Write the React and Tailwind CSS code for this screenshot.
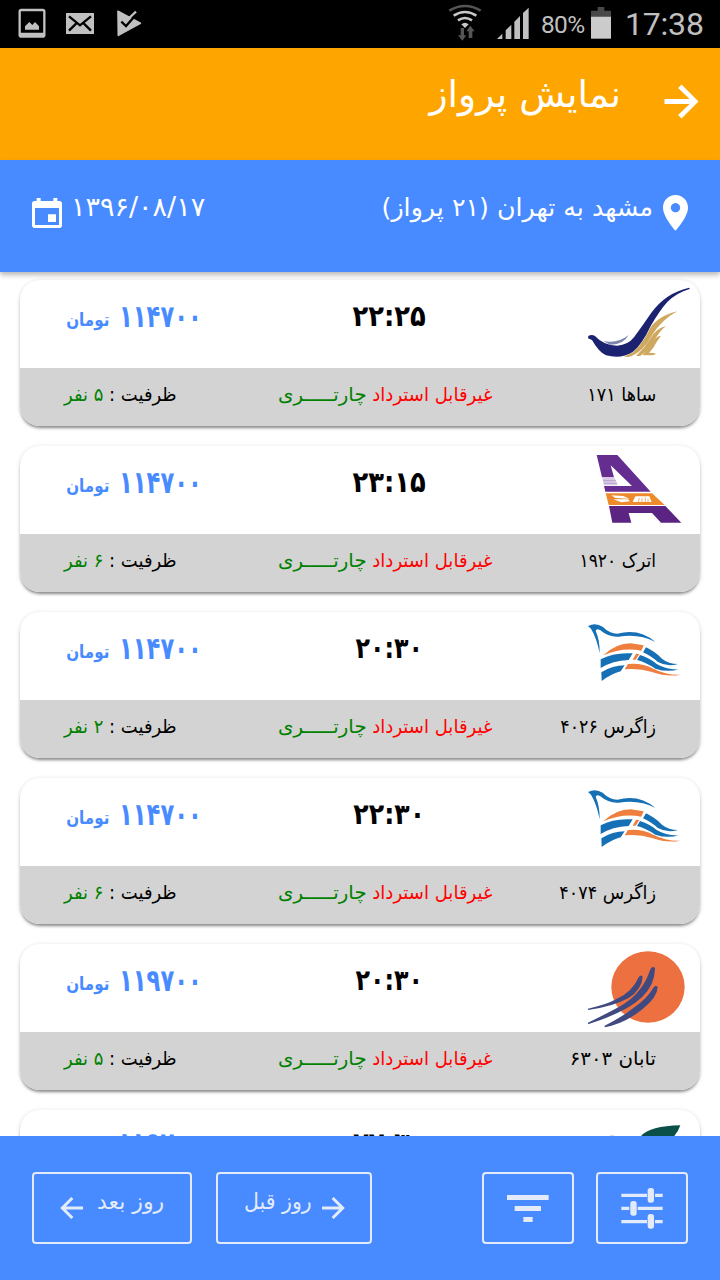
import React from "react";

const flights = [
  {
    logo: "saha",
    name: "ساها ۱۷۱",
    nameScale: "scale-x-[0.93]",
    time: "۲۲:۲۵",
    timeScale: "scale-x-[0.89]",
    price: "۱۱۴۷۰۰",
    seats: "۵",
  },
  {
    logo: "atrak",
    name: "اترک ۱۹۲۰",
    nameScale: "scale-x-[0.9]",
    time: "۲۳:۱۵",
    timeScale: "scale-x-[0.89]",
    price: "۱۱۴۷۰۰",
    seats: "۶",
  },
  {
    logo: "zagros",
    name: "زاگرس ۴۰۲۶",
    nameScale: "scale-x-[0.92]",
    time: "۲۰:۳۰",
    timeScale: "scale-x-[0.82]",
    price: "۱۱۴۷۰۰",
    seats: "۲",
  },
  {
    logo: "zagros",
    name: "زاگرس ۴۰۷۴",
    nameScale: "scale-x-[0.93]",
    time: "۲۲:۳۰",
    timeScale: "scale-x-[0.87]",
    price: "۱۱۴۷۰۰",
    seats: "۶",
  },
  {
    logo: "taban",
    name: "تابان ۶۳۰۳",
    nameScale: "scale-x-[1.04]",
    time: "۲۰:۳۰",
    timeScale: "scale-x-[0.82]",
    price: "۱۱۹۷۰۰",
    seats: "۵",
  },
  { logo: "leaf", time: "۲۲:۳۰", timeScale: "scale-x-[0.87]", price: "۱۱۹۷۰۰" },
];

function SahaLogo() {
  return (
    <svg className="w-28 h-[88px]" viewBox="84 12 336 264">
      <g fill="#cfa85f">
        <path d="M190 240 Q226 226 252 184 Q284 120 352 106 Q306 130 276 178 Q250 226 214 241 Q200 245 190 240 Z" />
        <path d="M228 240 Q254 216 272 186 Q290 156 318 150 Q298 166 284 192 Q266 226 240 240 Z" />
        <path d="M248 238 Q268 218 280 196 Q290 180 303 179 Q290 196 281 214 Q270 230 258 238 Z" />
        <path d="M250 233 Q274 228 288 233 Q280 239 256 237 Z" />
      </g>
      <path
        fill="#1b2270"
        stroke="#fff"
        strokeWidth="3"
        paintOrder="stroke"
        d="M84 187 L85 180 Q95 174 105 180 Q130 208 172 209 Q204 207 222 184 Q248 148 274 110 Q318 50 388 35 L389 39 Q350 50 322 78 Q300 102 272 150 Q246 206 218 228 Q184 250 138 238 Q116 228 96 192 Z"
      />
      <path fill="#7d86ab" d="M130 195 Q172 204 206 177 Q190 207 150 206 Z" />
    </svg>
  );
}

function AtrakLogo() {
  return (
    <svg className="w-28 h-[88px]" viewBox="84 18 336 264">
      <path fill="#662d91" d="M110 45 L172 45 L272 155 L136 155 L132 138 L216 138 L152 76 L162 112 L126 112 Z" />
      <path fill="#d9cbe6" d="M127 113 L164 113 L174 136 L132 136 Z" />
      <path stroke="#b9a2d0" strokeWidth="3" d="M129 122 H167 M131 130 H170" />
      <path fill="#ef8a2c" d="M137 160 L276 160 L314 195 L146 195 Z" />
      <path fill="#fff" d="M154 166 L190 168 L208 176 L166 174 Z M160 178 L204 178 L210 184 L184 187 Z M226 169 H268 L275 186 H218 Z" />
      <path stroke="#ef8a2c" strokeWidth="2" d="M234 186 L238 174 M246 186 V174 M256 186 V172 M264 186 V176" />
      <path fill="#5b2382" d="M147 198 L316 198 L364 248 L303 248 L276 219 L206 219 L214 248 L157 248 Z" />
    </svg>
  );
}

function ZagrosLogo() {
  return (
    <svg className="w-28 h-[88px]" viewBox="84 18 336 264">
      <g fill="#1670b5">
        <path d="M84 60 Q106 48 128 62 Q148 82 172 83 Q238 66 286 108 Q238 82 176 92 Q146 94 120 72 Q110 66 107 74 Q120 104 119 142 Q110 96 93 68 Z" />
        <path d="M122 160 Q162 138 218 142 L206 162 Q158 164 122 186 Z" />
        <path d="M124 199 Q158 178 194 178 L182 196 Q150 206 125 225 Z" />
        <path d="M258 124 Q284 136 306 158 Q326 174 354 174 Q322 184 294 168 Q270 148 249 139 Z" />
        <path d="M240 147 Q266 154 290 174 Q320 192 358 190 Q322 200 286 188 Q256 168 231 162 Z" />
      </g>
      <g fill="#ee7f3f">
        <path d="M130 148 Q168 112 212 112 L251 118 L244 134 Q190 122 130 148 Z" />
        <path d="M228 143 L238 144 L227 161 L218 161 Z" />
        <path d="M204 174 Q246 170 280 188 Q320 208 362 206 Q322 214 276 198 Q238 186 194 190 Z" />
      </g>
    </svg>
  );
}

function TabanLogo() {
  return (
    <svg className="w-28 h-[88px]" viewBox="84 12 336 264">
      <ellipse cx="264" cy="141" rx="110" ry="107" fill="#ec7040" />
      <path fill="#fff" d="M84 214 L160 198 L172 204 L84 244 Z M84 256 L180 218 L198 224 L130 256 L84 262 Z" />
      <g fill="#414a80">
        <path d="M84 206 Q140 194 168 178 Q216 158 236 112 Q242 102 248 110 Q246 148 206 174 Q158 200 84 210 Z" />
        <path d="M84 248 Q138 222 182 198 Q248 160 271 88 Q278 76 285 84 Q286 132 246 172 Q200 216 84 253 Z" />
        <path d="M134 257 Q188 230 220 204 Q262 176 281 142 Q288 132 293 142 Q292 172 248 207 Q196 250 134 262 Z" />
      </g>
    </svg>
  );
}

function LeafLogo() {
  return (
    <svg className="w-28 h-[88px]" viewBox="164 30 336 264">
      <path fill="#0b5048" d="M320 112 Q344 78 441 76 Q434 98 412 120 Z" />
      <ellipse cx="236" cy="114" rx="12" ry="8" fill="#c5cbd8" />
    </svg>
  );
}

const logos = {
  saha: SahaLogo,
  atrak: AtrakLogo,
  zagros: ZagrosLogo,
  taban: TabanLogo,
  leaf: LeafLogo,
};

function StatusBar() {
  return (
    <div className="h-12 shrink-0 bg-black flex items-center justify-between pl-[18px] pr-[17px] font-[Roboto] text-[#c0c0c0]">
      <div className="flex items-center gap-5">
        <svg className="w-7 h-12" viewBox="54 0 84 144">
          <rect x="59" y="30" width="74" height="80" rx="5" fill="none" stroke="#c0c0c0" strokeWidth="7" />
          <path d="M59 98 H133 V108 H59Z M75 89 V79 L88 66 L97 75 L105 66 L117 79 V89Z" fill="#c0c0c0" />
        </svg>
        <svg className="w-7 h-12" viewBox="198 0 84 144">
          <rect x="198" y="39" width="84" height="63" fill="#c0c0c0" />
          <path d="M207 49 L240 76 L273 49 M207 92 L229 70 M273 92 L251 70" fill="none" stroke="#000" strokeWidth="7" />
        </svg>
        <svg className="w-7 h-12" viewBox="342 0 84 144">
          <path d="M354 34 L421 70 L355 106 Z" fill="#c0c0c0" stroke="#c0c0c0" strokeWidth="5" strokeLinejoin="round" />
          <path d="M388 26 H412 V46 L404 54 Z" fill="#000" />
          <path d="M364 65 L378 78 L412 40" fill="none" stroke="#000" strokeWidth="7" />
          <path d="M384 57 L408 35" fill="none" stroke="#c0c0c0" strokeWidth="7" />
        </svg>
      </div>
      <div className="flex items-center">
        <svg className="w-9 h-12 mr-[14px]" viewBox="50 0 108 144">
          <g fill="none" strokeWidth="8">
            <path d="M57 32 Q104 4 151 32" stroke="#555" />
            <path d="M70 47 Q104 25 138 47" stroke="#c8c8c8" />
            <path d="M83 61 Q104 47 125 61" stroke="#c8c8c8" />
          </g>
          <path d="M93 73 Q104 64 115 73 L104 84 Z" fill="#c8c8c8" />
          <path d="M91 84 H101 V106 H108 L96 122 L83 106 H91Z M115 114 H126 V94 H133 L120 77 L108 94 H115Z" fill="#555" />
        </svg>
        <svg className="w-8 h-12 mr-3" viewBox="202 0 96 144">
          <path
            d="M202 117 L218 101 V117Z M228 117 V91 L245 74 V117Z M254 117 V65 L271 48 V117Z M280 117 V39 L297 23 V117Z"
            fill="#c0c0c0"
          />
        </svg>
        <span className="text-[24.500px] leading-12 tracking-[-0.7px] w-[44px] whitespace-nowrap pt-px">80%</span>
        <svg className="w-5 h-12 ml-1.5 mr-3.5" viewBox="483 0 60 144">
          <path d="M503 21 H523 V32 H543 V50 H483 V32 H503Z" fill="#484848" />
          <rect x="483" y="50" width="60" height="66" fill="#cbcbcb" />
        </svg>
        <span className="text-[32px] leading-12 tracking-[-0.2px] w-[78px] whitespace-nowrap">17:38</span>
      </div>
    </div>
  );
}

function FlightCard({ flight }) {
  const Logo = logos[flight.logo];
  const topPad = flight.name ? "pt-3" : "pt-[9px]";
  return (
    <div className="h-[146px] shrink-0 rounded-[20px] overflow-hidden bg-white whitespace-nowrap shadow-[0_3px_3px_-1px_rgba(0,0,0,0.4),0_1px_5px_rgba(0,0,0,0.14)]">
      <div className="h-[88px] flex justify-between">
        <div className={`w-[228px] flex font-bold text-[#488aff] ${topPad}`}>
          <div className="w-[89px] text-right">
            {flight.name && (
              <span className="inline-block origin-right scale-x-[0.84] text-[18px] leading-14" dir="rtl">
                تومان
              </span>
            )}
          </div>
          <span className="inline-block origin-left scale-x-[0.73] text-[31px] leading-12 ml-2.5">{flight.price}</span>
        </div>
        <div className={`w-[282px] text-center text-[29px] leading-12 font-bold text-black ${topPad}`}>
          <span className={`inline-block ${flight.timeScale}`}>{flight.time}</span>
        </div>
        <div className="w-[170px] flex justify-end">
          <Logo />
        </div>
      </div>
      {flight.name && (
        <div className="h-[58px] bg-[#d3d3d3] flex justify-between text-[19px] leading-[52px] text-black pl-11 pr-11">
          <div className="w-[214px]">
            <span className="inline-block origin-left scale-x-[0.945]" dir="rtl">
              ظرفیت : <span className="text-[#008000]">{flight.seats} نفر</span>
            </span>
          </div>
          <div className="w-[214px] flex justify-between" dir="rtl">
            <span className="inline-block origin-right scale-x-[0.95] text-[#ff0000]">غیرقابل استرداد</span>
            <span className="inline-block origin-left scale-x-[1.04] text-[#008000]">چارتـــــری</span>
          </div>
          <div className="flex-1" dir="rtl">
            <span className={`inline-block origin-right ${flight.nameScale}`}>{flight.name}</span>
          </div>
        </div>
      )}
    </div>
  );
}

export default function App() {
  return (
    <div className="w-[720px] h-[1280px] overflow-hidden flex flex-col bg-white font-['DejaVu_Sans',sans-serif]">
      <StatusBar />

      {/* Title bar */}
      <header className="h-28 shrink-0 bg-[#ffa500] flex justify-end items-start text-white pr-[13px]">
        <h1 className="text-[37.500px] leading-[92px] mr-[35px]" dir="rtl">
          نمایش پرواز
        </h1>
        <svg className="size-[51px] mt-[28px]" viewBox="0 0 24 24" fill="currentColor">
          <path d="M12 4l-1.600 1.600L15.800 10.800H4v2.400h11.800l-5.400 5.200L12 20l8-8z" />
        </svg>
      </header>

      {/* Route and date */}
      <div className="h-28 shrink-0 bg-[#488aff] flex justify-between items-start px-8 text-white leading-[95px] relative z-10 shadow-[0_3px_5px_rgba(0,0,0,0.28)]">
        <div className="flex gap-[9px]">
          <svg className="w-[30px] h-[30px] mt-[38px]" viewBox="0 0 90 90">
            <path
              fill="currentColor"
              fillRule="evenodd"
              d="M14 0 H26 V9 H64 V0 H76 V9 H82 Q90 9 90 17 V82 Q90 90 82 90 H8 Q0 90 0 82 V17 Q0 9 8 9 H14Z M9 30 V81 H81 V30Z M48 49 H72 V72 H48Z"
            />
          </svg>
          <span className="text-[27px] leading-[94px]">۱۳۹۶/۰۸/۱۷</span>
        </div>
        <div className="flex gap-2.5 text-[25.300px]">
          <span dir="rtl">مشهد به تهران (۲۱ پرواز)</span>
          <svg className="w-[25px] h-9 mt-[35px]" viewBox="0 0 75 108">
            <path
              fill="currentColor"
              fillRule="evenodd"
              d="M37.500 0 C16 0 0 17 0 38 C0 66 37.500 107 37.500 107 C37.500 107 75 66 75 38 C75 17 59 0 37.500 0Z M37.500 24 A14 14 0 1 1 37.400 24Z"
            />
          </svg>
        </div>
      </div>

      {/* Flights */}
      <main className="flex-1 min-h-0 overflow-hidden flex flex-col gap-5 px-5 pt-2">
        {flights.map((flight, i) => (
          <FlightCard key={i} flight={flight} />
        ))}
      </main>

      {/* Toolbar */}
      <footer className="h-36 shrink-0 bg-[#488aff] flex items-center px-8 text-[#e3ebfa] text-[22px] leading-[56px]">
        <button className="w-40 h-[72px] border-2 border-current rounded-[4px] flex items-start pl-[26px] gap-3.5">
          <svg className="w-[23px] h-[22px] mt-[23px]" viewBox="0 0 69 66" fill="none" stroke="currentColor" strokeWidth="9">
            <path d="M69 33 H8 M37 3 L7 33 L37 63" />
          </svg>
          <span dir="rtl">روز بعد</span>
        </button>
        <button className="ml-6 w-[156px] h-[72px] border-2 border-current rounded-[4px] flex items-start justify-end pr-[25px] gap-2.5">
          <span className="inline-block origin-right scale-x-[0.93]" dir="rtl">
            روز قبل
          </span>
          <svg className="w-[23px] h-[22px] mt-[23px]" viewBox="0 0 69 66" fill="none" stroke="currentColor" strokeWidth="9">
            <path d="M0 33 H61 M32 3 L62 33 L32 63" />
          </svg>
        </button>
        <button className="ml-auto w-[92px] h-[72px] border-2 border-current rounded-[4px] flex justify-center">
          <svg className="w-[42px] h-[72px] -mt-0.5" viewBox="322 216 126 216" fill="currentColor">
            <path d="M322 285 H447 V300 H322Z M345 318 H424 V333 H345Z M371 351 H399 V366 H371Z" />
          </svg>
        </button>
        <button className="ml-[22px] w-[92px] h-[72px] border-2 border-current rounded-[4px] flex justify-center">
          <svg className="w-[42px] h-[72px] -mt-0.5" viewBox="663 216 126 216" fill="currentColor">
            <path d="M664 281 H741 V291 H664Z M765 281 H788 V291 H765Z M664 320 H688 V330 H664Z M713 320 H788 V330 H713Z M664 360 H741 V370 H664Z M765 360 H788 V370 H765Z" />
            <rect x="743" y="264" width="19" height="44" rx="8" />
            <rect x="691" y="303" width="19" height="44" rx="8" />
            <rect x="743" y="342" width="19" height="44" rx="8" />
          </svg>
        </button>
      </footer>
    </div>
  );
}
